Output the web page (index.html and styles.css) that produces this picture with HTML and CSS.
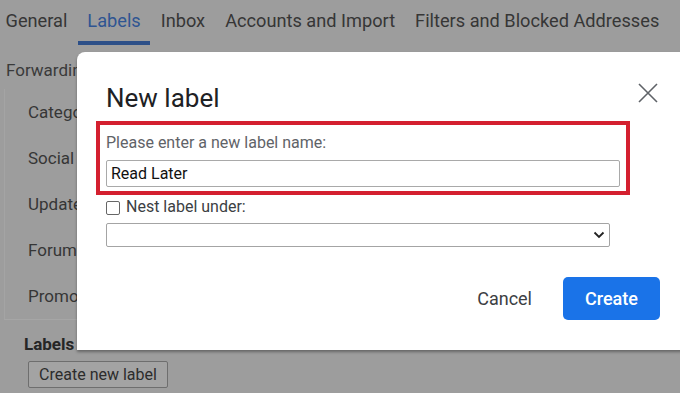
FILE: index.html
```html
<!DOCTYPE html>
<html>
<head>
<title>Settings - Labels</title>
<meta charset="UTF-8">
<meta name="viewport" content="width=device-width, initial-scale=1.0">
<link rel="stylesheet" href="styles.css">
</head>
<body>
<div id="page">

	<div class="tabs">
		<span class="tab">General</span>
		<span class="tab active">Labels</span>
		<span class="tab">Inbox</span>
		<span class="tab">Accounts and Import</span>
		<span class="tab">Filters and Blocked Addresses</span>
	</div>

	<div class="subtabs">Forwarding and POP/IMAP</div>

	<div class="categories">
		<div class="cat_row">Categories</div>
		<div class="cat_row">Social</div>
		<div class="cat_row">Updates</div>
		<div class="cat_row">Forums</div>
		<div class="cat_row">Promotions</div>
	</div>

	<div class="labels_head">
		<span class="labels_title">Labels</span>
		<span class="col_head col_list">Show in label list</span>
		<span class="col_head col_msg">Show in message</span>
	</div>
	<div class="labels_actions">
		<button class="old_btn">Create new label</button>
	</div>

	<!-- DIALOG -->
	<div class="dialog">
		<div class="dialog_head">
			<h1>New label</h1>
			<svg class="close" width="20" height="20" viewBox="0 0 20 20">
				<path d="M1 1 L19 19 M19 1 L1 19" stroke="#5f6368" stroke-width="1.6" fill="none"/>
			</svg>
		</div>

		<div class="highlight">
			<div class="field_label">Please enter a new label name:</div>
			<input class="name_input" type="text" value="Read Later">
		</div>

		<label class="nest_row">
			<span class="check"></span>
			Nest label under:
		</label>
		<div class="select">
			<svg width="12" height="8" viewBox="0 0 12 8">
				<path d="M1.5 1.5 L6 6 L10.5 1.5" stroke="#222" stroke-width="1.8" fill="none"/>
			</svg>
		</div>

		<div class="dialog_buttons">
			<button class="cancel">Cancel</button>
			<button class="create">Create</button>
		</div>
	</div>

</div>
</body>
</html>
```

FILE: styles.css
```css
html, body {
	margin: 0;
	padding: 0;
	overflow: hidden;
}

body {
	background-color: #9d9d9d;
	font-family: Roboto, "Liberation Sans", sans-serif;
	color: #3a3a3a;
}

#page {
	position: relative;
	width: 680px;
	height: 393px;
}

/**************************
/******BACKGROUND PAGE
/**/
.tabs {
	display: flex;
	gap: 1px;
	height: 45px;
	margin-left: -4px;
	white-space: nowrap;
}

.tab {
	padding: 1px 9.5px 0 9.5px;
	font-size: 18.2px;
	line-height: 40px;
	border-bottom: 4px solid transparent;
	box-sizing: border-box;
	height: 45px;
	color: #363636;
}

.tab.active {
	color: #2f5592;
	border-bottom-color: #2c4f88;
}

.subtabs {
	padding: 13px 0 0 6px;
	font-size: 17px;
	line-height: 24px;
	height: 31px;
	white-space: nowrap;
}

.categories {
	margin-left: 4px;
	border-left: 1px solid #a4a4a4;
	border-bottom: 1px solid #a6a6a6;
	padding-left: 23px;
}

.cat_row {
	font-size: 17px;
	height: 46px;
	line-height: 46px;
	color: #363636;
}

.labels_head {
	position: relative;
	height: 24px;
	padding-top: 12px;
	padding-left: 24px;
	line-height: 24px;
	white-space: nowrap;
}

.labels_title {
	font-size: 17px;
	font-weight: bold;
	color: #262626;
}

.col_head {
	position: absolute;
	top: 12px;
	font-size: 15px;
	font-weight: bold;
	color: #555;
}

.col_list { left: 325px; }
.col_msg { left: 595px; font-size: 10px; }

.labels_actions {
	padding: 5px 0 0 28px;
}

.old_btn {
	height: 27px;
	width: 140px;
	background-color: #a3a3a3;
	border: 1px solid #6e6e6e;
	border-radius: 2px;
	font-family: Roboto, sans-serif;
	font-size: 16px;
	color: #2c2c2c;
	padding: 0;
}

/**************************
/******DIALOG
/**/
.dialog {
	position: absolute;
	left: 77px;
	top: 52px;
	width: 554px;
	height: 268px;
	padding: 30px 24px 0 29px;
	background-color: #fff;
	border-radius: 8px 0 0 0;
	box-shadow: 0 2px 3px rgba(0,0,0,0.35);
	color: #202124;
}

.dialog_head {
	display: flex;
	justify-content: space-between;
	align-items: flex-start;
}

h1 {
	margin: 0;
	font-size: 26px;
	font-weight: normal;
	line-height: 32px;
	color: #202124;
}

.close {
	margin: 1px 2px 0 0;
}

.highlight {
	width: 514px;
	margin: 7px 0 0 -10px;
	border: 4px solid #d4202f;
	padding: 8px 6px 4px 6px;
}

.field_label {
	font-size: 16px;
	line-height: 20px;
	color: #5f6368;
	margin-bottom: 7px;
}

.name_input {
	display: block;
	box-sizing: border-box;
	width: 100%;
	height: 27px;
	border: 1px solid #a9a9a9;
	border-radius: 2px;
	padding: 0 4px;
	font-family: Roboto, sans-serif;
	font-size: 16px;
	color: #111;
	outline: none;
}

.nest_row {
	display: flex;
	align-items: center;
	gap: 6px;
	margin-top: 2px;
	font-size: 16px;
	line-height: 20px;
	height: 20px;
	color: #3c4043;
}

.check {
	width: 12px;
	height: 12px;
	border: 1px solid #666;
	border-radius: 2px;
	margin-top: 1px;
}

.select {
	box-sizing: border-box;
	width: 504px;
	height: 24px;
	margin-top: 6px;
	border: 1px solid #a4a4a4;
	border-radius: 2px;
	display: flex;
	justify-content: flex-end;
	align-items: center;
	padding-right: 4px;
}

.dialog_buttons {
	display: flex;
	justify-content: flex-end;
	align-items: center;
	gap: 15px;
	margin-top: 30px;
}

.dialog_buttons button {
	font-family: Roboto, sans-serif;
	border: none;
	cursor: pointer;
}

.cancel {
	background: none;
	color: #3c4043;
	height: 43px;
	padding: 0 16px;
	font-size: 18px;
	font-weight: normal;
}

.create {
	background-color: #1a73e8;
	color: #fff;
	width: 97px;
	height: 43px;
	border-radius: 5px;
	font-size: 18px;
	font-weight: 500;
}
```
